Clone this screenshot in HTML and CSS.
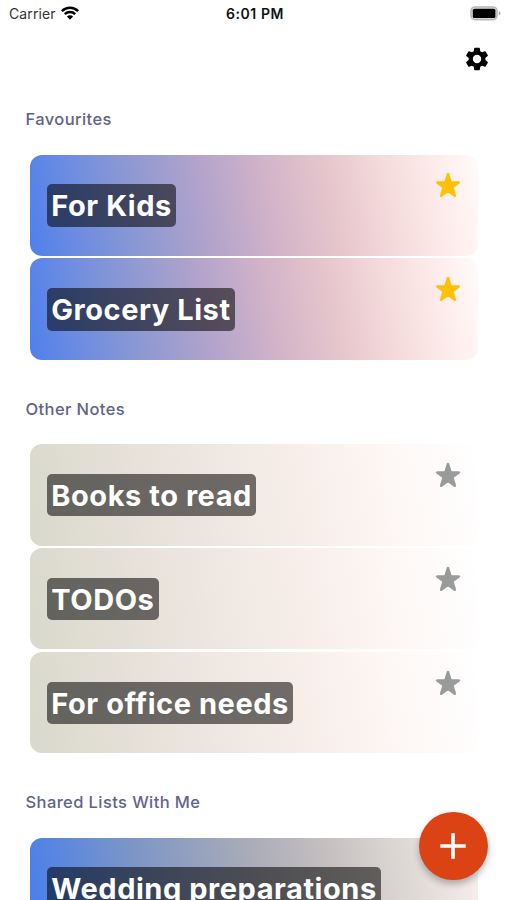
FILE: index.html
```html
<!DOCTYPE html>
<html lang="en">
<head>
<meta charset="utf-8">
<title>Notes</title>
<link rel="stylesheet" href="styles.css">
</head>
<body>
<svg class="defs" width="0" height="0" aria-hidden="true">
  <symbol id="star" viewBox="0 0 26 26"><path d="M13 2.200 15.500 10.200 23.700 10.500 17.300 15.300 19.800 23.700 13 18.800 6.200 23.700 8.700 15.300 2.300 10.500 10.500 10.200Z" fill="currentColor" stroke="currentColor" stroke-width="2.600" stroke-linejoin="round"/></symbol>
</svg>
<header class="status">
  <div class="carrier"><span>Carrier</span>
    <svg width="18" height="14" viewBox="0 0 18 14"><g fill="none" stroke="#000" stroke-width="2.500"><path d="M.9 5.1a11.5 11.5 0 0 1 16.2 0"/><path d="M3.8 8.1a7.4 7.4 0 0 1 10.4 0"/></g><path d="M9 13.7 5.9 10.6a4.4 4.4 0 0 1 6.2 0Z"/></svg>
  </div>
  <time class="time">6:01 PM</time>
  <svg class="battery" width="31" height="15" viewBox="0 0 31 15"><rect x="1" y="1" width="26" height="12.600" rx="4" fill="#ddd" stroke="#b8b8b8" stroke-width="1.600"/><rect x="2.800" y="2.700" width="22.600" height="9.200" rx="1.500"/><path d="M28.800 5q1.700.8 1.700 2.300t-1.700 2.300Z" fill="#aaa"/></svg>
</header>
<nav class="toolbar">
  <svg width="28" height="28" viewBox="0 0 24 24"><path d="M19.14 12.94c.04-.3.06-.61.06-.94s-.02-.64-.07-.94l2.03-1.58a.49.49 0 0 0 .12-.61l-1.92-3.32a.49.49 0 0 0-.59-.22l-2.39.96a7 7 0 0 0-1.62-.94l-.36-2.54a.48.48 0 0 0-.48-.41h-3.84a.48.48 0 0 0-.47.41l-.36 2.54a7.400 7.400 0 0 0-1.62.94l-2.390-.96a.49.49 0 0 0-.59.22L2.740 8.870a.48.48 0 0 0 .12.61l2.030 1.580c-.05.3-.09.63-.09.94s.02.64.07.94l-2.030 1.580a.49.49 0 0 0-.12.61l1.920 3.320c.12.22.37.29.59.22l2.390-.96c.5.38 1.030.7 1.620.94l.36 2.540c.05.24.24.41.48.41h3.840c.24 0 .44-.17.47-.41l.36-2.540a7 7 0 0 0 1.620-.94l2.390.96c.22.08.47 0 .59-.22l1.920-3.320a.48.48 0 0 0-.12-.61zM12 15.600a3.600 3.600 0 1 1 0-7.200 3.600 3.600 0 0 1 0 7.200z"/></svg>
</nav>
<main>
  <section>
    <h2>Favourites</h2>
    <div class="cards favourite">
      <article class="card"><h3>For Kids</h3><svg class="star"><use href="#star"/></svg></article>
      <article class="card"><h3>Grocery List</h3><svg class="star"><use href="#star"/></svg></article>
    </div>
  </section>
  <section>
    <h2>Other Notes</h2>
    <div class="cards other">
      <article class="card"><h3>Books to read</h3><svg class="star"><use href="#star"/></svg></article>
      <article class="card"><h3>TODOs</h3><svg class="star"><use href="#star"/></svg></article>
      <article class="card"><h3>For office needs</h3><svg class="star"><use href="#star"/></svg></article>
    </div>
  </section>
  <section>
    <h2>Shared Lists With Me</h2>
    <div class="cards shared">
      <article class="card"><h3>Wedding preparations</h3></article>
    </div>
  </section>
</main>
<button class="add" aria-label="Add list"><svg width="26" height="26" viewBox="0 0 26 26"><path d="M13 .3v25.400M.3 13h25.400" stroke="#fff" stroke-width="3.600"/></svg></button>
</body>
</html>
```
FILE: styles.css
```css
* { box-sizing: border-box; }
html { overflow: hidden; }
body {
  margin: 0;
  height: 900px;
  overflow: hidden;
  background: #fff;
  color: #111;
  font-family: Inter, "Liberation Sans", sans-serif;
}
svg { display: block; flex: none; }
.defs { position: absolute; }
.status {
  display: grid;
  grid-template-columns: 1fr auto 1fr;
  align-items: center;
  height: 28px;
  padding: 0 6px 0 9px;
  font-size: 14px;
}
.carrier { display: flex; align-items: center; gap: 5.500px; color: #333; letter-spacing: .1px; }
.carrier span, .time { margin-top: -2px; }
.carrier svg { margin-top: -2px; }
.time { font-size: 14px; font-weight: 600; letter-spacing: .6px; }
.battery { justify-self: end; margin-top: -2px; }
.toolbar { display: flex; justify-content: flex-end; padding: 17px 16px 0 0; height: 77.500px; }
section { height: 289.800px; }
section + section + section { margin-top: 103.500px; }
h2 {
  margin: 0;
  padding: 2.400px 0 0 25.500px;
  height: 49px;
  font-size: 16.500px;
  line-height: 22px;
  font-weight: 500;
  letter-spacing: .4px;
  color: #62638c;
}
.cards { display: flex; flex-direction: column; gap: 2.600px; margin: 0 29.500px 0 30.300px; }
.card {
  display: flex;
  justify-content: space-between;
  align-items: flex-start;
  height: 101.300px;
  flex: none;
  padding: 29.500px 16.700px 0 16.700px;
  border-radius: 12px;
}
h3 {
  margin: 0;
  padding: 0 4.300px;
  height: 42.700px;
  border-radius: 5px;
  background: rgba(0, 0, 0, .55);
  color: #fff;
  font-size: 29px;
  line-height: 43px;
  font-weight: 700;
  letter-spacing: .55px;
  white-space: nowrap;
}
.star { width: 26px; height: 26px; margin-top: -12px; }
.favourite .card { background: linear-gradient(80deg, #4f80ec 0%, #6f8de0 12%, #8c98d3 24%, #b1a3cb 39%, #d3b4c8 54%, #e6c6cc 67%, #f6dcdc 80%, #fff3f1 95%, #fffafa 100%); }
.favourite .star { color: #ffc107; }
.other .card { background: linear-gradient(80deg, #d9d9cc 0%, #e4dfd6 20%, #efe7e2 42%, #f8efeb 63%, #fdf7f5 80%, #fff 100%); }
.other .star { color: #999b9b; }
.shared .card { background: linear-gradient(80deg, #477eec 0%, #7e96c6 26%, #a9abb8 50%, #c5bfc0 67%, #dfd9d6 84%, #f7f0ee 100%); }
.add {
  position: fixed;
  right: 19.500px;
  bottom: 20px;
  display: grid;
  place-items: center;
  width: 68.500px;
  height: 68.500px;
  padding: 0;
  border: 0;
  border-radius: 50%;
  background: #db4314;
  box-shadow: 0 4px 7px rgba(0, 0, 0, .28);
}
```
